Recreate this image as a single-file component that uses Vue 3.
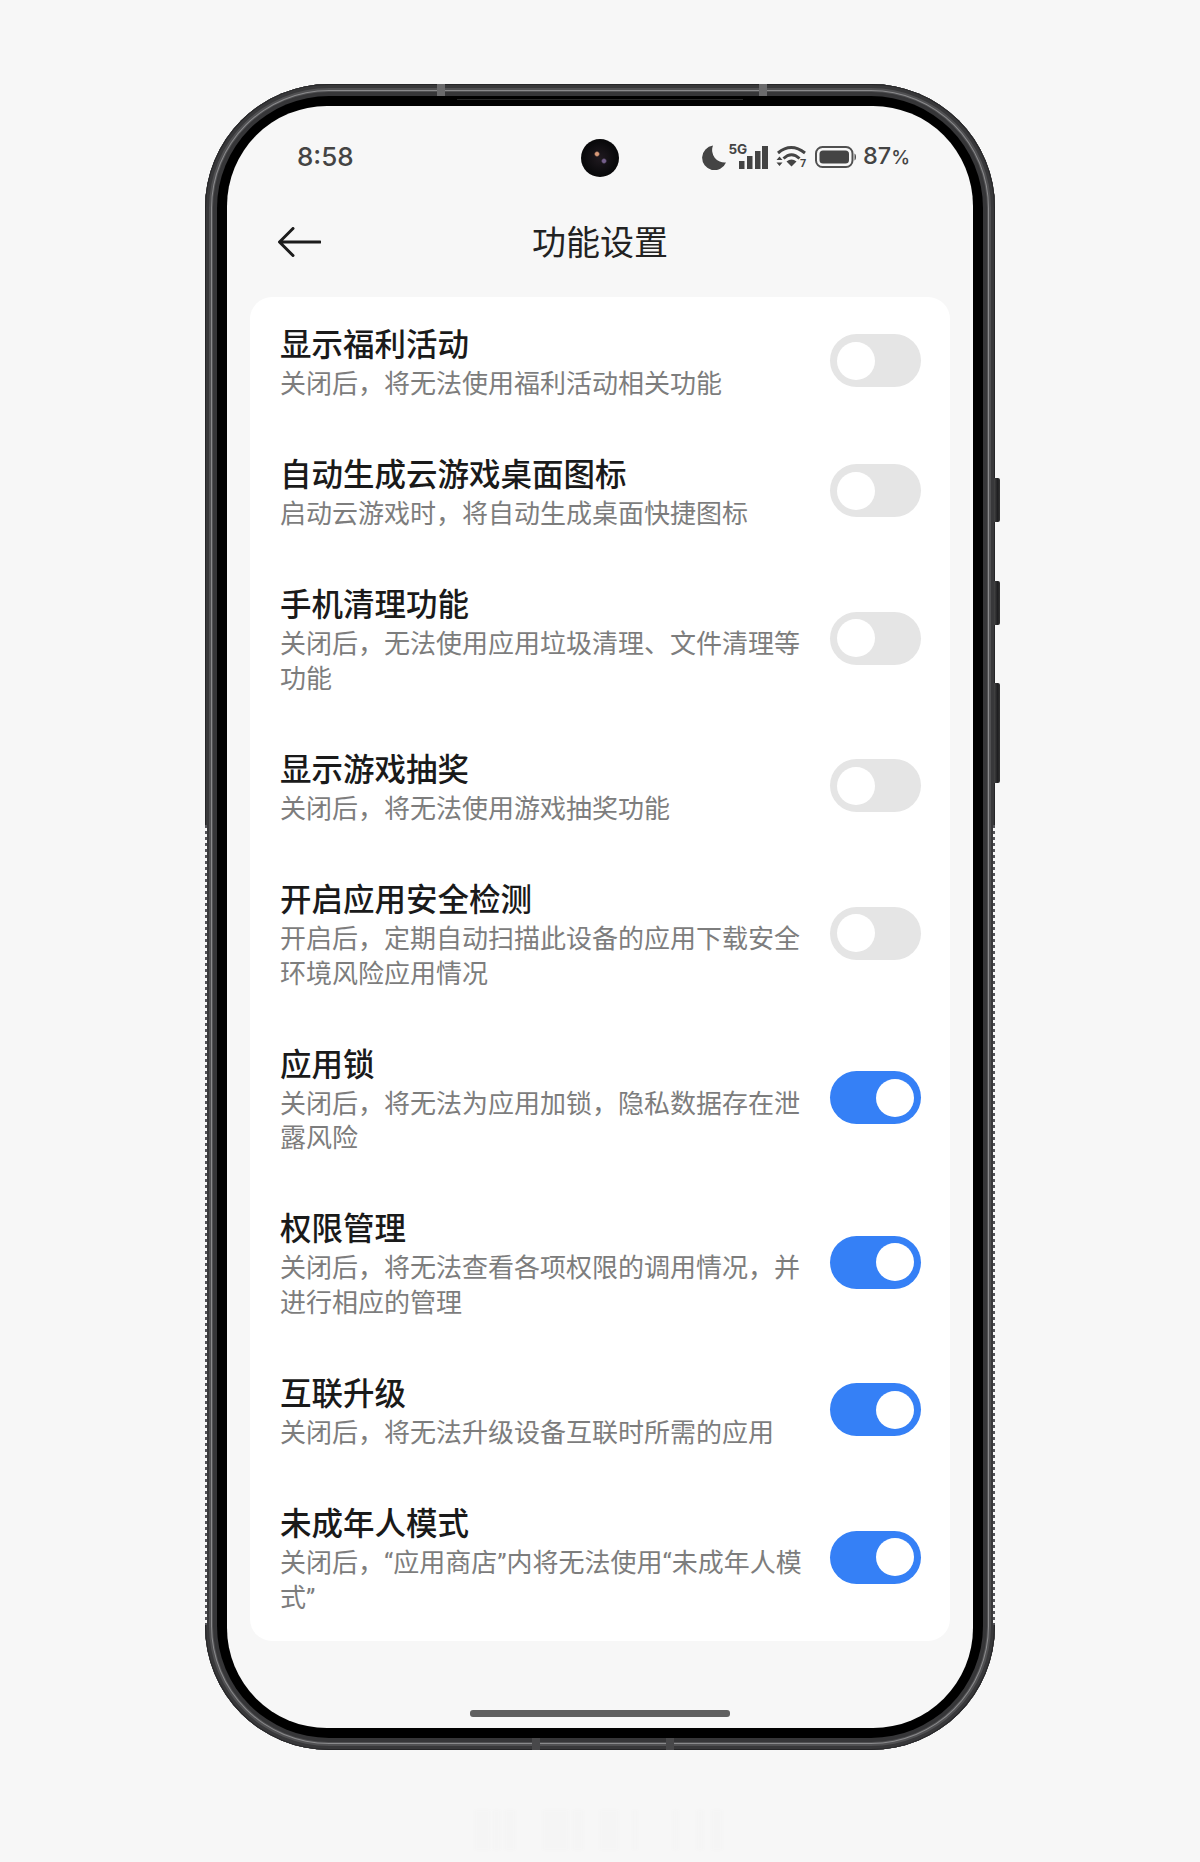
<script setup>
const rows = [
  { title: '显示福利活动', sub: '关闭后，将无法使用福利活动相关功能', on: false },
  { title: '自动生成云游戏桌面图标', sub: '启动云游戏时，将自动生成桌面快捷图标', on: false },
  { title: '手机清理功能', sub: '关闭后，无法使用应用垃圾清理、文件清理等功能', on: false },
  { title: '显示游戏抽奖', sub: '关闭后，将无法使用游戏抽奖功能', on: false },
  { title: '开启应用安全检测', sub: '开启后，定期自动扫描此设备的应用下载安全环境风险应用情况', on: false },
  { title: '应用锁', sub: '关闭后，将无法为应用加锁，隐私数据存在泄露风险', on: true },
  { title: '权限管理', sub: '关闭后，将无法查看各项权限的调用情况，并进行相应的管理', on: true },
  { title: '互联升级', sub: '关闭后，将无法升级设备互联时所需的应用', on: true },
  { title: '未成年人模式', sub: '关闭后，“应用商店”内将无法使用“未成年人模式”', on: true },
]
// faint reflection under the phone: [gap before, width]
const ghosts = [
  [15, 15], [3, 7], [5, 10], [28, 25], [5, 10], [17, 18], [15, 4], [36, 5], [19, 6], [9, 10],
]
</script>

<template>
  <div class="page">
    <div class="phone">
      <i class="notch top" style="left: 232px"></i>
      <i class="notch top" style="left: 554px"></i>
      <i class="notch bottom" style="left: 327px"></i>
      <i class="notch bottom" style="left: 461px"></i>
      <i class="speaker"></i>
      <i class="side-btn" style="top: 394px; height: 44px"></i>
      <i class="side-btn" style="top: 497px; height: 44px"></i>
      <i class="side-btn" style="top: 599px; height: 100px"></i>
      <i class="dots left"></i>
      <i class="dots right"></i>
      <div class="bezel">
        <div class="screen">
          <div class="status">
            <span class="time">8:58</span>
            <span class="camera"></span>
            <div class="status-right">
              <svg class="moon" width="24" height="25" viewBox="0 0 24 25">
                <path d="M11 0.5A12.4 12.4 0 1 0 24 17.5A12.5 12.5 0 0 1 11 0.5Z" fill="#444" />
              </svg>
              <div class="signal">
                <span class="five-g">5G</span>
                <svg width="29" height="23" viewBox="0 0 29 23">
                  <rect x="0" y="15" width="5.5" height="8" fill="#444" />
                  <rect x="8" y="10" width="5.5" height="13" fill="#444" />
                  <rect x="16" y="5" width="5.5" height="18" fill="#444" />
                  <rect x="23" y="0" width="6" height="23" fill="#444" />
                </svg>
              </div>
              <svg class="wifi" width="31" height="24" viewBox="0 0 31 24">
                <path d="M2 8Q15 -3 29 8" fill="none" stroke="#444" stroke-width="3" />
                <path d="M7.5 13.5Q15.5 6 23.5 13.5" fill="none" stroke="#444" stroke-width="3" />
                <path d="M10.5 16.5Q15.5 12.5 20.5 16.5L15.5 21.5Z" fill="#444" />
                <path d="M3.5 11.5L6.5 15H0.5ZM0.5 17.5H6.5L3.5 21Z" fill="#444" />
                <text x="24" y="22" class="wifi-7">7</text>
              </svg>
              <svg class="battery" width="42" height="22" viewBox="0 0 42 22">
                <rect x="1" y="1" width="36.5" height="20" rx="6.5" fill="none" stroke="#505050" stroke-width="2" />
                <rect x="4.5" y="4.5" width="29.5" height="13" rx="3.5" fill="#444" />
                <path d="M39.5 7.5C41.5 8 41.5 14 39.5 14.5Z" fill="#505050" />
              </svg>
              <span class="pct">87<small>%</small></span>
            </div>
          </div>

          <div class="nav">
            <svg class="back" width="44" height="30" viewBox="0 0 44 30">
              <path d="M43 15H3M16 1.5L2.5 15L16 28.5" fill="none" stroke="#1c1c1c" stroke-width="3" stroke-linecap="round" stroke-linejoin="round" />
            </svg>
            <h1>功能设置</h1>
          </div>

          <div class="card">
            <div v-for="row in rows" :key="row.title" class="row">
              <div class="row-text">
                <div class="row-title">{{ row.title }}</div>
                <div class="row-sub">{{ row.sub }}</div>
              </div>
              <span class="toggle" :class="{ on: row.on }"><i></i></span>
            </div>
          </div>

          <div class="home-bar"></div>
        </div>
      </div>
    </div>
    <div class="ghost">
      <span v-for="(g, i) in ghosts" :key="i" :style="{ marginLeft: g[0] + 'px', width: g[1] + 'px' }"></span>
    </div>
  </div>
</template>

<style scoped>
.page {
  height: 1862px;
  padding-top: 84px;
  box-sizing: border-box;
  background: #f7f7f7;
  overflow: hidden;
  font-family: Roboto, "Noto Sans CJK SC", sans-serif;
}

.phone {
  position: relative;
  width: 790px;
  height: 1666px;
  margin: 0 auto;
  padding: 12px;
  box-sizing: border-box;
  border-radius: 124px;
  background: #363638;
  box-shadow:
    inset 0 0 0 1px #262628,
    inset 0 0 0 4px #38383a,
    inset 0 0 0 6px #505052,
    inset 0 0 0 7px #8a8a8c,
    inset 0 0 0 8px #505052;
}

.notch {
  position: absolute;
  width: 8px;
  height: 12px;
  background: #6a6a6c;
}

.notch.top {
  top: 0;
}

.notch.bottom {
  bottom: 0;
  background: #48484a;
}

.speaker {
  position: absolute;
  top: 15px;
  left: 252px;
  width: 286px;
  height: 1px;
  background: #2a2a2a;
  z-index: 1;
}

.side-btn {
  position: absolute;
  left: 789px;
  width: 6px;
  border-radius: 0 2px 2px 0;
  background: linear-gradient(90deg, #444 0, #1e1e20 60%, #333 100%);
}

.dots {
  position: absolute;
  top: 741px;
  width: 2px;
  height: 800px;
  background: repeating-linear-gradient(180deg, #55555a 0 3px, #f7f7f7 3px 6px);
}

.dots.left {
  left: 0;
}

.dots.right {
  right: 0;
}

.bezel {
  height: 100%;
  padding: 10px;
  box-sizing: border-box;
  border-radius: 112px;
  background: #000;
}

.screen {
  display: flex;
  flex-direction: column;
  height: 100%;
  border-radius: 100px;
  background: #f7f7f7;
  overflow: hidden;
}

.status {
  display: grid;
  grid-template-columns: 1fr auto 1fr;
  align-items: center;
  height: 102px;
  flex: none;
  color: #444;
}

.time {
  margin: -2px 0 0 70px;
  font-family: Inter, sans-serif;
  font-size: 26px;
  font-weight: 500;
}

.camera {
  width: 38px;
  height: 38px;
  border-radius: 50%;
  background:
    radial-gradient(circle at 16px 15px, #d99a78 0 1.5px, transparent 3px),
    radial-gradient(circle at 23px 22px, #75608c 0 1.5px, transparent 3px),
    radial-gradient(circle, #201a20 0, #0a0a0c 60%, #020202 100%);
  margin-top: 2px;
}

.status-right {
  display: flex;
  align-items: center;
  justify-content: flex-end;
  margin-right: 63px;
}

.moon {
  margin-right: 13px;
}

.signal {
  position: relative;
  width: 29px;
  height: 23px;
  margin-right: 7.5px;
}

.five-g {
  position: absolute;
  top: -3px;
  left: -11px;
  font-family: Inter, sans-serif;
  font-size: 13.5px;
  font-weight: 700;
  line-height: 13px;
}

.signal svg {
  display: block;
}

.wifi-7 {
  font-family: Roboto, sans-serif;
  font-size: 11px;
  font-weight: 700;
  fill: #444;
}

.battery {
  margin-left: 8px;
}

.pct {
  margin-left: 6px;
  font-family: Inter, sans-serif;
  font-size: 23.5px;
  font-weight: 500;
  line-height: 24px;
}

.pct small {
  font-size: 19px;
}

.nav {
  position: relative;
  display: flex;
  align-items: center;
  justify-content: center;
  height: 68px;
  flex: none;
  margin-bottom: 21px;
}

.back {
  position: absolute;
  top: 19px;
  left: 50px;
}

h1 {
  margin: 0 0 4px;
  font-size: 34px;
  font-weight: 400;
  color: #222;
}

.card {
  margin: 0 23px;
  flex: none;
  border-radius: 22px;
  background: #fff;
}

.row {
  display: flex;
  align-items: center;
  justify-content: space-between;
  padding: 28px 29px 25.5px 30px;
}

.row-text {
  width: 530px;
}

.row-title {
  font-size: 31.5px;
  font-weight: 500;
  line-height: 42px;
  color: #1a1a1a;
}

.row-sub {
  font-size: 26px;
  line-height: 34.6px;
  color: #7d7d7d;
}

.toggle {
  position: relative;
  flex: none;
  width: 91px;
  height: 53px;
  margin-bottom: 5px;
  border-radius: 27px;
  background: #e5e5e5;
}

.toggle i {
  position: absolute;
  top: 7.5px;
  left: 7px;
  width: 38px;
  height: 38px;
  border-radius: 50%;
  background: #fff;
}

.toggle.on {
  background: #3580f6;
}

.toggle.on i {
  left: 46px;
}

.home-bar {
  width: 260px;
  height: 7px;
  margin: auto auto 11px;
  flex: none;
  border-radius: 3px;
  background: #5f5f5f;
}

.ghost {
  display: flex;
  height: 40px;
  margin: 60px 0 0 460px;
  filter: blur(1px);
}

.ghost span {
  background: #f5f5f5;
}
</style>

<style>
html,
body {
  background: #f7f7f7;
}
</style>
